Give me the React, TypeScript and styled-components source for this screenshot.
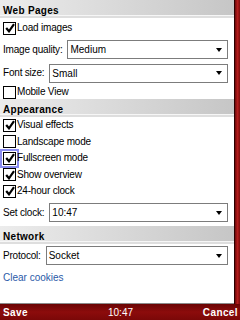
import React from "react";
import styled, { createGlobalStyle } from "styled-components";

const Global = createGlobalStyle`
  html, body { margin: 0; padding: 0; background: #fff; }
  body { font-family: "Liberation Sans", Arial, sans-serif; font-size: 10px; color: #000; }
`;

const Page = styled.div`
  width: 240px;
  height: 320px;
  display: flex;
  flex-direction: column;
  overflow: hidden;
`;

const Main = styled.div`
  flex: 1;
  display: flex;
  min-height: 0;
`;

const Content = styled.div`
  flex: 1;
  background: #fff;
  border-bottom: 1px solid #8a8a8a;
  display: flex;
  flex-direction: column;
`;

const Scrollbar = styled.div`
  width: 5px;
  border-left: 1px solid #2a0000;
  background: linear-gradient(to right, #6e0a0a, #b31c1c 50%, #7a0c0c);
`;

const Header = styled.div`
  height: 16px;
  padding: 6px 0 0 3px;
  box-sizing: border-box;
  font-weight: bold;
  font-size: 10px;
  letter-spacing: 0.3px;
  line-height: 9px;
  background: linear-gradient(to right, #ececec, #c6c6c6);
  border-bottom: 1px solid #f6f6f6;
  box-shadow: 0 2px 0 #dedede;
  margin-bottom: 2px;
`;

const CheckRow = styled.div<{ $h: number }>`
  height: ${(p) => p.$h}px;
  display: flex;
  align-items: center;
  padding-left: 3px;
  gap: 1px;
`;

const Box = styled.div<{ $focus?: boolean }>`
  width: 11px;
  height: 11px;
  border: 1px solid #000;
  background: #fff;
  display: flex;
  align-items: center;
  justify-content: center;
  box-shadow: ${(p) => (p.$focus ? "0 0 0 1px #fff, 0 0 0 3px #8a8cf0" : "none")};
`;

const Label = styled.span`
  line-height: 12px;
  white-space: nowrap;
  letter-spacing: -0.2px;
`;

const SelectRow = styled.div<{ $h: number }>`
  height: ${(p) => p.$h}px;
  display: flex;
  align-items: center;
  padding: 0 6px 0 3px;
  gap: 5px;
`;

const Select = styled.div`
  flex: 1;
  height: 17px;
  border: 1px solid #7c7c7c;
  display: flex;
  align-items: center;
  justify-content: space-between;
  padding: 0 5px 0 2px;
`;

const Arrow = styled.div`
  width: 0;
  height: 0;
  border-left: 3.5px solid transparent;
  border-right: 3.5px solid transparent;
  border-top: 4px solid #000;
`;

const Link = styled.div`
  height: 20px;
  display: flex;
  align-items: center;
  padding-left: 3px;
  color: #2a5aa8;
`;

const Bottom = styled.div`
  height: 16px;
  background: linear-gradient(to bottom, #6a0404, #8c0c0c 50%, #7a0808);
  color: #fff;
  display: grid;
  grid-template-columns: 1fr auto 1fr;
  align-items: center;
  padding: 0 2px 0 3px;
  font-size: 10px;
`;

const Soft = styled.span<{ $align: string; $bold?: boolean }>`
  justify-self: ${(p) => p.$align};
  font-weight: ${(p) => (p.$bold ? "bold" : "normal")};
  letter-spacing: ${(p) => (p.$bold ? "0.4px" : "0")};
`;

const Check = () => (
  <svg width="10" height="10" viewBox="0 0 10 10">
    <path d="M1.2 5 L4 8.3 L9 1.2" stroke="#000" strokeWidth="2.2" fill="none" />
  </svg>
);

const CB = ({ label, checked, focus, h }: { label: string; checked?: boolean; focus?: boolean; h: number }) => (
  <CheckRow $h={h}>
    <Box $focus={focus}>{checked && <Check />}</Box>
    <Label>{label}</Label>
  </CheckRow>
);

const Sel = ({ label, value, h }: { label: string; value: string; h: number }) => (
  <SelectRow $h={h}>
    <Label>{label}</Label>
    <Select>
      <span>{value}</span>
      <Arrow />
    </Select>
  </SelectRow>
);

export default function App() {
  return (
    <Page>
      <Global />
      <Main>
        <Content>
          <Header>Web Pages</Header>
          <CB label="Load images" checked h={20} />
          <Sel label="Image quality:" value="Medium" h={23} />
          <Sel label="Font size:" value="Small" h={24} />
          <CB label="Mobile View" h={14} />
          <Header>Appearance</Header>
          <CB label="Visual effects" checked h={16.5} />
          <CB label="Landscape mode" h={16.5} />
          <CB label="Fullscreen mode" checked focus h={16.5} />
          <CB label="Show overview" checked h={16.5} />
          <CB label="24-hour clock" checked h={16.5} />
          <Sel label="Set clock:" value="10:47" h={26} />
          <Header>Network</Header>
          <Sel label="Protocol:" value="Socket" h={24} />
          <Link>Clear cookies</Link>
        </Content>
        <Scrollbar />
      </Main>
      <Bottom>
        <Soft $align="start" $bold>Save</Soft>
        <Soft $align="center">10:47</Soft>
        <Soft $align="end" $bold>Cancel</Soft>
      </Bottom>
    </Page>
  );
}
